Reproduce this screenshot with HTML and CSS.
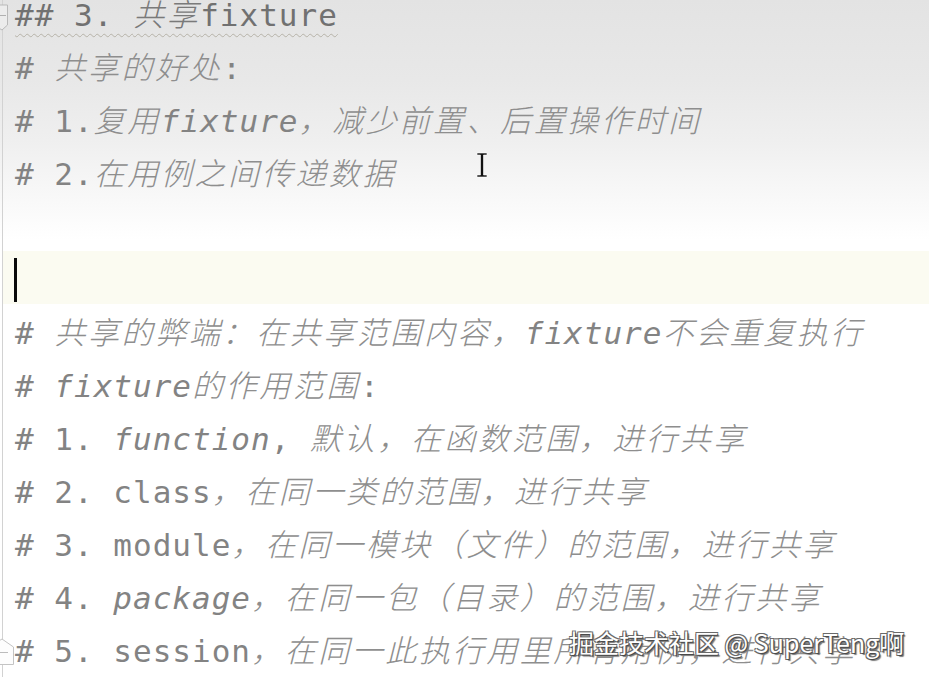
FILE: index.html
```html
<!DOCTYPE html>
<html lang="zh">
<head>
<meta charset="utf-8">
<title>fixture</title>
<link rel="stylesheet" href="styles.css">
</head>
<body>
<div class="editor">
  <div class="gutter"></div>
  <div class="code">
    <div class="line head"><span class="wavy">## 3. <span class="zh">共享</span>fixture</span></div>
    <div class="line"># <span class="zh">共享的好处</span>:</div>
    <div class="line"># 1.<span class="zh">复用</span><i>fixture</i><span class="zh">，减少前置、后置操作时间</span></div>
    <div class="line"># 2.<span class="zh">在用例之间传递数据</span></div>
    <div class="line"></div>
    <div class="line current"><span class="caret"></span></div>
    <div class="line"># <span class="zh">共享的弊端：在共享范围内容，</span><i>fixture</i><span class="zh">不会重复执行</span></div>
    <div class="line"># <i>fixture</i><span class="zh">的作用范围</span>:</div>
    <div class="line"># 1. <i>function</i>, <span class="zh">默认，在函数范围，进行共享</span></div>
    <div class="line"># 2. class<span class="zh">，在同一类的范围，进行共享</span></div>
    <div class="line"># 3. module<span class="zh">，在同一模块（文件）的范围，进行共享</span></div>
    <div class="line"># 4. <i>package</i><span class="zh">，在同一包（目录）的范围，进行共享</span></div>
    <div class="line"># 5. session<span class="zh">，在同一此执行用里所有用例，进行共享</span></div>
  </div>
</div>

<svg class="fold fold-top" width="14" height="34" viewBox="0 0 14 34">
  <path d="M-6 5 H7.5 V25 L2 30 L-6 25 Z" fill="#ececec" stroke="#b9b9b9" stroke-width="1"/>
  <path d="M-2 15.5 H6" stroke="#b0b0b0" stroke-width="1"/>
</svg>
<svg class="fold fold-bottom" width="16" height="30" viewBox="0 0 16 30">
  <path d="M-6 6 L2 1 L13.5 9 V26.5 H-6 Z" fill="#fdfdfd" stroke="#c4c4c4" stroke-width="1"/>
  <path d="M-2 14.5 H8" stroke="#bcbcbc" stroke-width="1"/>
</svg>

<svg class="ibeam" width="12" height="27" viewBox="0 0 12 27">
  <path d="M1 1 H11 V3 H7.5 V23 H11 V25 H1 V23 H4.5 V3 H1 Z" fill="#111" stroke="#fff" stroke-width="0.6"/>
</svg>

<div class="watermark">掘金技术社区 @ SuperTeng啊</div>
</body>
</html>
```

FILE: styles.css
```css
html, body {
  margin: 0;
  padding: 0;
}

body {
  width: 929px;
  height: 677px;
  overflow: hidden;
  position: relative;
  background: linear-gradient(to bottom, #e3e3e3 0px, #e8e8e8 80px, #efefef 140px, #f8f8f8 195px, #ffffff 240px);
  font-family: "DejaVu Sans Mono", "Liberation Mono", "Noto Sans CJK SC", monospace;
}

.editor {
  display: flex;
  height: 100%;
}

.gutter {
  width: 2px;
  flex: none;
  border-right: 1px solid #d2d2d2;
}

.code {
  flex: 1;
  margin-top: -14px;
}

.line {
  height: 53px;
  line-height: 53px;
  padding-left: 12px;
  white-space: pre;
  font-size: 31px;
  letter-spacing: 1px;
  color: #838383;
}

.line i {
  font-style: italic;
}

.zh {
  font-family: "Noto Sans CJK SC", sans-serif;
  font-style: italic;
  letter-spacing: 2.6px;
  color: #8e8e8e;
  font-weight: 300;
}

.head {
  color: #717171;
}

.head .zh {
  color: #7a7a7a;
}

.wavy {
  text-decoration: underline wavy #b6b2a8;
  text-decoration-thickness: 1px;
  text-underline-offset: 7px;
}

.current {
  background: #fbfbf1;
}

.caret {
  display: inline-block;
  width: 3px;
  height: 44px;
  background: #0a0a0a;
  vertical-align: middle;
  margin-left: -1px;
}

.fold {
  position: absolute;
  left: 0;
}

.fold-top {
  top: 0;
}

.fold-bottom {
  top: 638px;
}

.ibeam {
  position: absolute;
  left: 476px;
  top: 152px;
}

.watermark {
  position: absolute;
  left: 569px;
  top: 624px;
  font-family: "Noto Sans CJK SC", sans-serif;
  font-size: 25px;
  line-height: 36px;
  color: #ffffff;
  white-space: nowrap;
  text-shadow: 1px 1px 0 #4a4a4a, -1px -1px 0 #6a6a6a, 1px -1px 0 #6a6a6a, -1px 1px 0 #6a6a6a, 2px 2px 1px #777;
}
```
